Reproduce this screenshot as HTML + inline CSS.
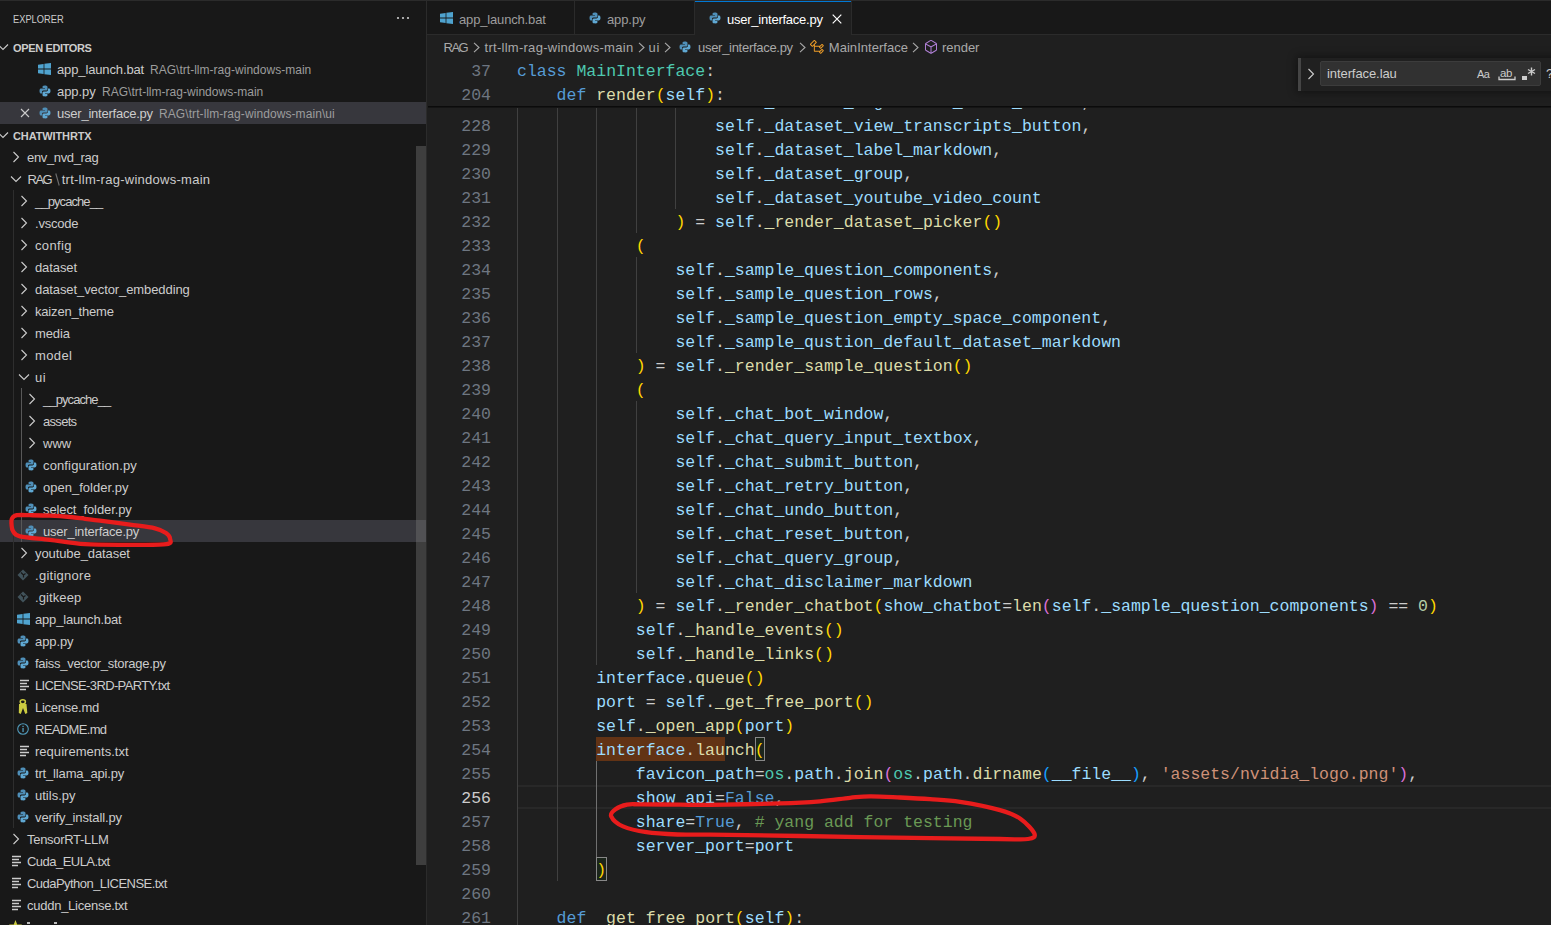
<!DOCTYPE html><html><head><meta charset="utf-8"><style>
*{margin:0;padding:0;box-sizing:border-box}
html,body{width:1551px;height:925px;overflow:hidden;background:#181818}
body{position:relative;font-family:"Liberation Sans",sans-serif;color:#cccccc}
.abs{position:absolute}
.t{position:absolute;white-space:nowrap;font-size:13px;height:22px;line-height:22px}
.row{position:absolute;left:0;width:426px;height:22px}
.sel{background:#37373d}
.code{position:absolute;left:517px;height:24px;line-height:24px;font-family:"Liberation Mono",monospace;font-size:16.5px;white-space:pre;color:#cccccc}
.ln{position:absolute;left:427px;width:64px;text-align:right;height:24px;line-height:24px;font-family:"Liberation Mono",monospace;font-size:16.5px;color:#6e7681}
.ig{position:absolute;width:1px;background:#404040}
</style></head><body>
<div class="abs" style="left:0;top:0;width:1551px;height:1px;background:#2b2b2b;z-index:50"></div>
<div class="abs" style="left:426px;top:0;width:1px;height:925px;background:#2b2b2b;z-index:5"></div>
<div class="t" style="left:13px;top:8px;font-size:11px;transform:scaleX(0.845);transform-origin:0 0;color:#cccccc">EXPLORER</div>
<svg class="abs" style="left:396px;top:16px" width="14" height="4" viewBox="0 0 14 4"><circle cx="2" cy="2" r="1.1" fill="#cccccc"/><circle cx="7" cy="2" r="1.1" fill="#cccccc"/><circle cx="12" cy="2" r="1.1" fill="#cccccc"/></svg>
<svg class="abs" style="left:-3px;top:43px" width="12" height="8" viewBox="0 0 12 8"><path d="M1 1.5 L6 6.5 L11 1.5" fill="none" stroke="#cccccc" stroke-width="1.1"/></svg>
<div class="t" style="left:13px;top:37px;font-size:11px;color:#cccccc;letter-spacing:-0.362px;font-weight:bold;">OPEN EDITORS</div>
<div class="row sel" style="top:102px"></div>
<svg class="abs" style="left:38px;top:63px" width="13" height="12" viewBox="0 0 13 12"><path d="M0 1.7 L5.6 0.9 V5.6 H0 Z M6.4 0.8 L13 0 V5.6 H6.4 Z M0 6.4 H5.6 V11.1 L0 10.3 Z M6.4 6.4 H13 V12 L6.4 11.2 Z" fill="#4fa3cf"/></svg>
<div class="t" style="left:57px;top:59px;font-size:13px;color:#cccccc;letter-spacing:-0.131px;">app_launch.bat</div>
<div class="t" style="left:150px;top:59px;font-size:12px;color:#9d9d9d;letter-spacing:0.022px;">RAG\trt-llm-rag-windows-main</div>
<svg class="abs" style="left:39px;top:85px" width="12" height="12" viewBox="0 0 12 12"><path d="M5.8 0.5 C3.5 0.5 3.6 1.5 3.6 1.5 V3 H6 V3.6 H2.2 C2.2 3.6 0.5 3.4 0.5 6 C0.5 8.6 2 8.5 2 8.5 H3 V7.2 C3 7.2 2.9 5.6 4.5 5.6 H7 C7 5.6 8.5 5.6 8.5 4.2 V1.9 C8.5 1.9 8.7 0.5 5.8 0.5 Z" fill="#4f8fb8"/><path d="M6.2 11.5 C8.5 11.5 8.4 10.5 8.4 10.5 V9 H6 V8.4 H9.8 C9.8 8.4 11.5 8.6 11.5 6 C11.5 3.4 10 3.5 10 3.5 H9 V4.8 C9 4.8 9.1 6.4 7.5 6.4 H5 C5 6.4 3.5 6.4 3.5 7.8 V10.1 C3.5 10.1 3.3 11.5 6.2 11.5 Z" fill="#5fa8d3"/></svg>
<div class="t" style="left:57px;top:81px;font-size:13px;color:#cccccc;letter-spacing:-0.066px;">app.py</div>
<div class="t" style="left:102px;top:81px;font-size:12px;color:#9d9d9d;letter-spacing:0.022px;">RAG\trt-llm-rag-windows-main</div>
<svg class="abs" style="left:20px;top:108px" width="10" height="10" viewBox="0 0 10 10"><path d="M1 1 L9 9 M9 1 L1 9" stroke="#cccccc" stroke-width="1.1"/></svg>
<svg class="abs" style="left:39px;top:107px" width="12" height="12" viewBox="0 0 12 12"><path d="M5.8 0.5 C3.5 0.5 3.6 1.5 3.6 1.5 V3 H6 V3.6 H2.2 C2.2 3.6 0.5 3.4 0.5 6 C0.5 8.6 2 8.5 2 8.5 H3 V7.2 C3 7.2 2.9 5.6 4.5 5.6 H7 C7 5.6 8.5 5.6 8.5 4.2 V1.9 C8.5 1.9 8.7 0.5 5.8 0.5 Z" fill="#4f8fb8"/><path d="M6.2 11.5 C8.5 11.5 8.4 10.5 8.4 10.5 V9 H6 V8.4 H9.8 C9.8 8.4 11.5 8.6 11.5 6 C11.5 3.4 10 3.5 10 3.5 H9 V4.8 C9 4.8 9.1 6.4 7.5 6.4 H5 C5 6.4 3.5 6.4 3.5 7.8 V10.1 C3.5 10.1 3.3 11.5 6.2 11.5 Z" fill="#5fa8d3"/></svg>
<div class="t" style="left:57px;top:103px;font-size:13px;color:#cccccc;letter-spacing:-0.226px;">user_interface.py</div>
<div class="t" style="left:159px;top:103px;font-size:12px;color:#9d9d9d;letter-spacing:0.080px;">RAG\trt-llm-rag-windows-main\ui</div>
<svg class="abs" style="left:-3px;top:131px" width="12" height="8" viewBox="0 0 12 8"><path d="M1 1.5 L6 6.5 L11 1.5" fill="none" stroke="#cccccc" stroke-width="1.1"/></svg>
<div class="t" style="left:13px;top:125px;font-size:11px;color:#cccccc;letter-spacing:-0.120px;font-weight:bold;">CHATWITHRTX</div>
<svg class="abs" style="left:12px;top:151px" width="8" height="12" viewBox="0 0 8 12"><path d="M1.5 1 L6.5 6 L1.5 11" fill="none" stroke="#cccccc" stroke-width="1.1"/></svg>
<div class="t" style="left:27px;top:147px;font-size:13px;color:#cccccc;letter-spacing:-0.354px;">env_nvd_rag</div>
<svg class="abs" style="left:10px;top:175px" width="12" height="8" viewBox="0 0 12 8"><path d="M1 1.5 L6 6.5 L11 1.5" fill="none" stroke="#cccccc" stroke-width="1.1"/></svg>
<div class="t" style="left:27.5px;top:169px;font-size:13px;color:#cccccc;letter-spacing:-1.500px;">RAG</div>
<svg class="abs" style="left:55px;top:173px" width="5" height="13" viewBox="0 0 5 13"><path d="M0.8 0.5 L4.2 12.5" stroke="#707070" stroke-width="1.1"/></svg>
<div class="t" style="left:61.7px;top:169px;font-size:13px;color:#cccccc;letter-spacing:0.262px;">trt-llm-rag-windows-main</div>
<svg class="abs" style="left:20px;top:195px" width="8" height="12" viewBox="0 0 8 12"><path d="M1.5 1 L6.5 6 L1.5 11" fill="none" stroke="#cccccc" stroke-width="1.1"/></svg>
<div class="t" style="left:35px;top:191px;font-size:13px;color:#cccccc;letter-spacing:-0.911px;">__pycache__</div>
<svg class="abs" style="left:20px;top:217px" width="8" height="12" viewBox="0 0 8 12"><path d="M1.5 1 L6.5 6 L1.5 11" fill="none" stroke="#cccccc" stroke-width="1.1"/></svg>
<div class="t" style="left:35px;top:213px;font-size:13px;color:#cccccc;letter-spacing:-0.229px;">.vscode</div>
<svg class="abs" style="left:20px;top:239px" width="8" height="12" viewBox="0 0 8 12"><path d="M1.5 1 L6.5 6 L1.5 11" fill="none" stroke="#cccccc" stroke-width="1.1"/></svg>
<div class="t" style="left:35px;top:235px;font-size:13px;color:#cccccc;letter-spacing:0.368px;">config</div>
<svg class="abs" style="left:20px;top:261px" width="8" height="12" viewBox="0 0 8 12"><path d="M1.5 1 L6.5 6 L1.5 11" fill="none" stroke="#cccccc" stroke-width="1.1"/></svg>
<div class="t" style="left:35px;top:257px;font-size:13px;color:#cccccc;letter-spacing:-0.105px;">dataset</div>
<svg class="abs" style="left:20px;top:283px" width="8" height="12" viewBox="0 0 8 12"><path d="M1.5 1 L6.5 6 L1.5 11" fill="none" stroke="#cccccc" stroke-width="1.1"/></svg>
<div class="t" style="left:35px;top:279px;font-size:13px;color:#cccccc;letter-spacing:-0.087px;">dataset_vector_embedding</div>
<svg class="abs" style="left:20px;top:305px" width="8" height="12" viewBox="0 0 8 12"><path d="M1.5 1 L6.5 6 L1.5 11" fill="none" stroke="#cccccc" stroke-width="1.1"/></svg>
<div class="t" style="left:35px;top:301px;font-size:13px;color:#cccccc;letter-spacing:-0.183px;">kaizen_theme</div>
<svg class="abs" style="left:20px;top:327px" width="8" height="12" viewBox="0 0 8 12"><path d="M1.5 1 L6.5 6 L1.5 11" fill="none" stroke="#cccccc" stroke-width="1.1"/></svg>
<div class="t" style="left:35px;top:323px;font-size:13px;color:#cccccc;letter-spacing:-0.119px;">media</div>
<svg class="abs" style="left:20px;top:349px" width="8" height="12" viewBox="0 0 8 12"><path d="M1.5 1 L6.5 6 L1.5 11" fill="none" stroke="#cccccc" stroke-width="1.1"/></svg>
<div class="t" style="left:35px;top:345px;font-size:13px;color:#cccccc;letter-spacing:0.395px;">model</div>
<svg class="abs" style="left:18px;top:373px" width="12" height="8" viewBox="0 0 12 8"><path d="M1 1.5 L6 6.5 L11 1.5" fill="none" stroke="#cccccc" stroke-width="1.1"/></svg>
<div class="t" style="left:35px;top:367px;font-size:13px;color:#cccccc;letter-spacing:0.570px;">ui</div>
<svg class="abs" style="left:28px;top:393px" width="8" height="12" viewBox="0 0 8 12"><path d="M1.5 1 L6.5 6 L1.5 11" fill="none" stroke="#cccccc" stroke-width="1.1"/></svg>
<div class="t" style="left:43px;top:389px;font-size:13px;color:#cccccc;letter-spacing:-0.911px;">__pycache__</div>
<svg class="abs" style="left:28px;top:415px" width="8" height="12" viewBox="0 0 8 12"><path d="M1.5 1 L6.5 6 L1.5 11" fill="none" stroke="#cccccc" stroke-width="1.1"/></svg>
<div class="t" style="left:43px;top:411px;font-size:13px;color:#cccccc;letter-spacing:-0.694px;">assets</div>
<svg class="abs" style="left:28px;top:437px" width="8" height="12" viewBox="0 0 8 12"><path d="M1.5 1 L6.5 6 L1.5 11" fill="none" stroke="#cccccc" stroke-width="1.1"/></svg>
<div class="t" style="left:43px;top:433px;font-size:13px;color:#cccccc;letter-spacing:0.012px;">www</div>
<svg class="abs" style="left:25px;top:459px" width="12" height="12" viewBox="0 0 12 12"><path d="M5.8 0.5 C3.5 0.5 3.6 1.5 3.6 1.5 V3 H6 V3.6 H2.2 C2.2 3.6 0.5 3.4 0.5 6 C0.5 8.6 2 8.5 2 8.5 H3 V7.2 C3 7.2 2.9 5.6 4.5 5.6 H7 C7 5.6 8.5 5.6 8.5 4.2 V1.9 C8.5 1.9 8.7 0.5 5.8 0.5 Z" fill="#4f8fb8"/><path d="M6.2 11.5 C8.5 11.5 8.4 10.5 8.4 10.5 V9 H6 V8.4 H9.8 C9.8 8.4 11.5 8.6 11.5 6 C11.5 3.4 10 3.5 10 3.5 H9 V4.8 C9 4.8 9.1 6.4 7.5 6.4 H5 C5 6.4 3.5 6.4 3.5 7.8 V10.1 C3.5 10.1 3.3 11.5 6.2 11.5 Z" fill="#5fa8d3"/></svg>
<div class="t" style="left:43px;top:455px;font-size:13px;color:#cccccc;letter-spacing:0.135px;">configuration.py</div>
<svg class="abs" style="left:25px;top:481px" width="12" height="12" viewBox="0 0 12 12"><path d="M5.8 0.5 C3.5 0.5 3.6 1.5 3.6 1.5 V3 H6 V3.6 H2.2 C2.2 3.6 0.5 3.4 0.5 6 C0.5 8.6 2 8.5 2 8.5 H3 V7.2 C3 7.2 2.9 5.6 4.5 5.6 H7 C7 5.6 8.5 5.6 8.5 4.2 V1.9 C8.5 1.9 8.7 0.5 5.8 0.5 Z" fill="#4f8fb8"/><path d="M6.2 11.5 C8.5 11.5 8.4 10.5 8.4 10.5 V9 H6 V8.4 H9.8 C9.8 8.4 11.5 8.6 11.5 6 C11.5 3.4 10 3.5 10 3.5 H9 V4.8 C9 4.8 9.1 6.4 7.5 6.4 H5 C5 6.4 3.5 6.4 3.5 7.8 V10.1 C3.5 10.1 3.3 11.5 6.2 11.5 Z" fill="#5fa8d3"/></svg>
<div class="t" style="left:43px;top:477px;font-size:13px;color:#cccccc;letter-spacing:0.016px;">open_folder.py</div>
<svg class="abs" style="left:25px;top:503px" width="12" height="12" viewBox="0 0 12 12"><path d="M5.8 0.5 C3.5 0.5 3.6 1.5 3.6 1.5 V3 H6 V3.6 H2.2 C2.2 3.6 0.5 3.4 0.5 6 C0.5 8.6 2 8.5 2 8.5 H3 V7.2 C3 7.2 2.9 5.6 4.5 5.6 H7 C7 5.6 8.5 5.6 8.5 4.2 V1.9 C8.5 1.9 8.7 0.5 5.8 0.5 Z" fill="#4f8fb8"/><path d="M6.2 11.5 C8.5 11.5 8.4 10.5 8.4 10.5 V9 H6 V8.4 H9.8 C9.8 8.4 11.5 8.6 11.5 6 C11.5 3.4 10 3.5 10 3.5 H9 V4.8 C9 4.8 9.1 6.4 7.5 6.4 H5 C5 6.4 3.5 6.4 3.5 7.8 V10.1 C3.5 10.1 3.3 11.5 6.2 11.5 Z" fill="#5fa8d3"/></svg>
<div class="t" style="left:43px;top:499px;font-size:13px;color:#cccccc;letter-spacing:-0.102px;">select_folder.py</div>
<div class="row sel" style="top:520px"></div>
<svg class="abs" style="left:25px;top:525px" width="12" height="12" viewBox="0 0 12 12"><path d="M5.8 0.5 C3.5 0.5 3.6 1.5 3.6 1.5 V3 H6 V3.6 H2.2 C2.2 3.6 0.5 3.4 0.5 6 C0.5 8.6 2 8.5 2 8.5 H3 V7.2 C3 7.2 2.9 5.6 4.5 5.6 H7 C7 5.6 8.5 5.6 8.5 4.2 V1.9 C8.5 1.9 8.7 0.5 5.8 0.5 Z" fill="#4f8fb8"/><path d="M6.2 11.5 C8.5 11.5 8.4 10.5 8.4 10.5 V9 H6 V8.4 H9.8 C9.8 8.4 11.5 8.6 11.5 6 C11.5 3.4 10 3.5 10 3.5 H9 V4.8 C9 4.8 9.1 6.4 7.5 6.4 H5 C5 6.4 3.5 6.4 3.5 7.8 V10.1 C3.5 10.1 3.3 11.5 6.2 11.5 Z" fill="#5fa8d3"/></svg>
<div class="t" style="left:43px;top:521px;font-size:13px;color:#cccccc;letter-spacing:-0.214px;">user_interface.py</div>
<svg class="abs" style="left:20px;top:547px" width="8" height="12" viewBox="0 0 8 12"><path d="M1.5 1 L6.5 6 L1.5 11" fill="none" stroke="#cccccc" stroke-width="1.1"/></svg>
<div class="t" style="left:35px;top:543px;font-size:13px;color:#cccccc;letter-spacing:-0.087px;">youtube_dataset</div>
<svg class="abs" style="left:17px;top:569px" width="12" height="12" viewBox="0 0 12 12"><path d="M6 0.5 L11.5 6 L6 11.5 L0.5 6 Z" fill="#41535b"/><path d="M4 3.5 L6.5 6 M6.5 6 L6.5 8.5 M6.5 6 L8.5 4.5" stroke="#181818" stroke-width="1.2"/></svg>
<div class="t" style="left:35px;top:565px;font-size:13px;color:#cccccc;letter-spacing:0.272px;">.gitignore</div>
<svg class="abs" style="left:17px;top:591px" width="12" height="12" viewBox="0 0 12 12"><path d="M6 0.5 L11.5 6 L6 11.5 L0.5 6 Z" fill="#41535b"/><path d="M4 3.5 L6.5 6 M6.5 6 L6.5 8.5 M6.5 6 L8.5 4.5" stroke="#181818" stroke-width="1.2"/></svg>
<div class="t" style="left:35px;top:587px;font-size:13px;color:#cccccc;letter-spacing:0.100px;">.gitkeep</div>
<svg class="abs" style="left:17px;top:613px" width="13" height="12" viewBox="0 0 13 12"><path d="M0 1.7 L5.6 0.9 V5.6 H0 Z M6.4 0.8 L13 0 V5.6 H6.4 Z M0 6.4 H5.6 V11.1 L0 10.3 Z M6.4 6.4 H13 V12 L6.4 11.2 Z" fill="#4fa3cf"/></svg>
<div class="t" style="left:35px;top:609px;font-size:13px;color:#cccccc;letter-spacing:-0.177px;">app_launch.bat</div>
<svg class="abs" style="left:17px;top:635px" width="12" height="12" viewBox="0 0 12 12"><path d="M5.8 0.5 C3.5 0.5 3.6 1.5 3.6 1.5 V3 H6 V3.6 H2.2 C2.2 3.6 0.5 3.4 0.5 6 C0.5 8.6 2 8.5 2 8.5 H3 V7.2 C3 7.2 2.9 5.6 4.5 5.6 H7 C7 5.6 8.5 5.6 8.5 4.2 V1.9 C8.5 1.9 8.7 0.5 5.8 0.5 Z" fill="#4f8fb8"/><path d="M6.2 11.5 C8.5 11.5 8.4 10.5 8.4 10.5 V9 H6 V8.4 H9.8 C9.8 8.4 11.5 8.6 11.5 6 C11.5 3.4 10 3.5 10 3.5 H9 V4.8 C9 4.8 9.1 6.4 7.5 6.4 H5 C5 6.4 3.5 6.4 3.5 7.8 V10.1 C3.5 10.1 3.3 11.5 6.2 11.5 Z" fill="#5fa8d3"/></svg>
<div class="t" style="left:35px;top:631px;font-size:13px;color:#cccccc;letter-spacing:-0.086px;">app.py</div>
<svg class="abs" style="left:17px;top:657px" width="12" height="12" viewBox="0 0 12 12"><path d="M5.8 0.5 C3.5 0.5 3.6 1.5 3.6 1.5 V3 H6 V3.6 H2.2 C2.2 3.6 0.5 3.4 0.5 6 C0.5 8.6 2 8.5 2 8.5 H3 V7.2 C3 7.2 2.9 5.6 4.5 5.6 H7 C7 5.6 8.5 5.6 8.5 4.2 V1.9 C8.5 1.9 8.7 0.5 5.8 0.5 Z" fill="#4f8fb8"/><path d="M6.2 11.5 C8.5 11.5 8.4 10.5 8.4 10.5 V9 H6 V8.4 H9.8 C9.8 8.4 11.5 8.6 11.5 6 C11.5 3.4 10 3.5 10 3.5 H9 V4.8 C9 4.8 9.1 6.4 7.5 6.4 H5 C5 6.4 3.5 6.4 3.5 7.8 V10.1 C3.5 10.1 3.3 11.5 6.2 11.5 Z" fill="#5fa8d3"/></svg>
<div class="t" style="left:35px;top:653px;font-size:13px;color:#cccccc;letter-spacing:-0.291px;">faiss_vector_storage.py</div>
<svg class="abs" style="left:20px;top:679px" width="10" height="12" viewBox="0 0 10 12"><path d="M0 1.5 H9 M0 4.5 H7 M0 7.5 H9 M0 10.5 H6" stroke="#cccccc" stroke-width="1.3" fill="none"/></svg>
<div class="t" style="left:35px;top:675px;font-size:13px;color:#cccccc;letter-spacing:-0.644px;">LICENSE-3RD-PARTY.txt</div>
<svg class="abs" style="left:17px;top:698px" width="12" height="17" viewBox="0 0 12 17"><ellipse cx="5.8" cy="3.8" rx="2.6" ry="2.1" fill="none" stroke="#cbcb41" stroke-width="1.5"/><path d="M2 6 L9.5 6 L10.3 15 L8.3 16 L6 10 L3.8 16 L1.8 15 Z" fill="#cbcb41"/></svg>
<div class="t" style="left:35px;top:697px;font-size:13px;color:#cccccc;letter-spacing:-0.250px;">License.md</div>
<svg class="abs" style="left:17px;top:723px" width="12" height="12" viewBox="0 0 12 12"><circle cx="6" cy="6" r="5.3" fill="none" stroke="#519aba" stroke-width="1.1"/><rect x="5.4" y="5" width="1.3" height="4" fill="#519aba"/><rect x="5.4" y="2.8" width="1.3" height="1.3" fill="#519aba"/></svg>
<div class="t" style="left:35px;top:719px;font-size:13px;color:#cccccc;letter-spacing:-0.657px;">README.md</div>
<svg class="abs" style="left:20px;top:745px" width="10" height="12" viewBox="0 0 10 12"><path d="M0 1.5 H9 M0 4.5 H7 M0 7.5 H9 M0 10.5 H6" stroke="#cccccc" stroke-width="1.3" fill="none"/></svg>
<div class="t" style="left:35px;top:741px;font-size:13px;color:#cccccc;letter-spacing:0.027px;">requirements.txt</div>
<svg class="abs" style="left:17px;top:767px" width="12" height="12" viewBox="0 0 12 12"><path d="M5.8 0.5 C3.5 0.5 3.6 1.5 3.6 1.5 V3 H6 V3.6 H2.2 C2.2 3.6 0.5 3.4 0.5 6 C0.5 8.6 2 8.5 2 8.5 H3 V7.2 C3 7.2 2.9 5.6 4.5 5.6 H7 C7 5.6 8.5 5.6 8.5 4.2 V1.9 C8.5 1.9 8.7 0.5 5.8 0.5 Z" fill="#4f8fb8"/><path d="M6.2 11.5 C8.5 11.5 8.4 10.5 8.4 10.5 V9 H6 V8.4 H9.8 C9.8 8.4 11.5 8.6 11.5 6 C11.5 3.4 10 3.5 10 3.5 H9 V4.8 C9 4.8 9.1 6.4 7.5 6.4 H5 C5 6.4 3.5 6.4 3.5 7.8 V10.1 C3.5 10.1 3.3 11.5 6.2 11.5 Z" fill="#5fa8d3"/></svg>
<div class="t" style="left:35px;top:763px;font-size:13px;color:#cccccc;letter-spacing:-0.165px;">trt_llama_api.py</div>
<svg class="abs" style="left:17px;top:789px" width="12" height="12" viewBox="0 0 12 12"><path d="M5.8 0.5 C3.5 0.5 3.6 1.5 3.6 1.5 V3 H6 V3.6 H2.2 C2.2 3.6 0.5 3.4 0.5 6 C0.5 8.6 2 8.5 2 8.5 H3 V7.2 C3 7.2 2.9 5.6 4.5 5.6 H7 C7 5.6 8.5 5.6 8.5 4.2 V1.9 C8.5 1.9 8.7 0.5 5.8 0.5 Z" fill="#4f8fb8"/><path d="M6.2 11.5 C8.5 11.5 8.4 10.5 8.4 10.5 V9 H6 V8.4 H9.8 C9.8 8.4 11.5 8.6 11.5 6 C11.5 3.4 10 3.5 10 3.5 H9 V4.8 C9 4.8 9.1 6.4 7.5 6.4 H5 C5 6.4 3.5 6.4 3.5 7.8 V10.1 C3.5 10.1 3.3 11.5 6.2 11.5 Z" fill="#5fa8d3"/></svg>
<div class="t" style="left:35px;top:785px;font-size:13px;color:#cccccc;letter-spacing:0.006px;">utils.py</div>
<svg class="abs" style="left:17px;top:811px" width="12" height="12" viewBox="0 0 12 12"><path d="M5.8 0.5 C3.5 0.5 3.6 1.5 3.6 1.5 V3 H6 V3.6 H2.2 C2.2 3.6 0.5 3.4 0.5 6 C0.5 8.6 2 8.5 2 8.5 H3 V7.2 C3 7.2 2.9 5.6 4.5 5.6 H7 C7 5.6 8.5 5.6 8.5 4.2 V1.9 C8.5 1.9 8.7 0.5 5.8 0.5 Z" fill="#4f8fb8"/><path d="M6.2 11.5 C8.5 11.5 8.4 10.5 8.4 10.5 V9 H6 V8.4 H9.8 C9.8 8.4 11.5 8.6 11.5 6 C11.5 3.4 10 3.5 10 3.5 H9 V4.8 C9 4.8 9.1 6.4 7.5 6.4 H5 C5 6.4 3.5 6.4 3.5 7.8 V10.1 C3.5 10.1 3.3 11.5 6.2 11.5 Z" fill="#5fa8d3"/></svg>
<div class="t" style="left:35px;top:807px;font-size:13px;color:#cccccc;letter-spacing:-0.110px;">verify_install.py</div>
<svg class="abs" style="left:12px;top:833px" width="8" height="12" viewBox="0 0 8 12"><path d="M1.5 1 L6.5 6 L1.5 11" fill="none" stroke="#cccccc" stroke-width="1.1"/></svg>
<div class="t" style="left:27px;top:829px;font-size:13px;color:#cccccc;letter-spacing:-0.299px;">TensorRT-LLM</div>
<svg class="abs" style="left:12px;top:855px" width="10" height="12" viewBox="0 0 10 12"><path d="M0 1.5 H9 M0 4.5 H7 M0 7.5 H9 M0 10.5 H6" stroke="#cccccc" stroke-width="1.3" fill="none"/></svg>
<div class="t" style="left:27px;top:851px;font-size:13px;color:#cccccc;letter-spacing:-0.533px;">Cuda_EULA.txt</div>
<svg class="abs" style="left:12px;top:877px" width="10" height="12" viewBox="0 0 10 12"><path d="M0 1.5 H9 M0 4.5 H7 M0 7.5 H9 M0 10.5 H6" stroke="#cccccc" stroke-width="1.3" fill="none"/></svg>
<div class="t" style="left:27px;top:873px;font-size:13px;color:#cccccc;letter-spacing:-0.540px;">CudaPython_LICENSE.txt</div>
<svg class="abs" style="left:12px;top:899px" width="10" height="12" viewBox="0 0 10 12"><path d="M0 1.5 H9 M0 4.5 H7 M0 7.5 H9 M0 10.5 H6" stroke="#cccccc" stroke-width="1.3" fill="none"/></svg>
<div class="t" style="left:27px;top:895px;font-size:13px;color:#cccccc;letter-spacing:-0.255px;">cuddn_License.txt</div>
<svg class="abs" style="left:9px;top:920px" width="13" height="13" viewBox="0 0 13 13"><path d="M6.5 0 L8.2 4.4 L13 4.6 L9.2 7.6 L10.5 12.4 L6.5 9.6 L2.5 12.4 L3.8 7.6 L0 4.6 L4.8 4.4 Z" fill="#cbcb41"/></svg>
<div class="abs" style="left:27px;top:922px;width:3px;height:2px;background:#bbbbbb"></div>
<div class="abs" style="left:54px;top:922px;width:3px;height:2px;background:#bbbbbb"></div>
<div class="abs" style="left:13px;top:190px;width:1px;height:638px;background:#2e2e2e"></div>
<div class="abs" style="left:21px;top:388px;width:1px;height:154px;background:#585858"></div>
<div class="abs" style="left:416px;top:146px;width:10px;height:719px;background:rgba(121,121,121,0.4)"></div>
<div class="abs" style="left:427px;top:35px;width:1124px;height:890px;background:#1f1f1f"></div>
<div class="abs" style="left:427px;top:34px;width:1124px;height:1px;background:#2b2b2b"></div>
<div class="abs" style="left:574px;top:0;width:1px;height:35px;background:#2b2b2b"></div>
<div class="abs" style="left:694px;top:0;width:1px;height:35px;background:#2b2b2b"></div>
<div class="abs" style="left:851px;top:0;width:1px;height:35px;background:#2b2b2b"></div>
<div class="abs" style="left:695px;top:0;width:156px;height:35px;background:#1f1f1f"></div>
<div class="abs" style="left:695px;top:1px;width:156px;height:1px;background:#0078d4;z-index:60"></div>
<svg class="abs" style="left:440px;top:12px" width="13" height="12" viewBox="0 0 13 12"><path d="M0 1.7 L5.6 0.9 V5.6 H0 Z M6.4 0.8 L13 0 V5.6 H6.4 Z M0 6.4 H5.6 V11.1 L0 10.3 Z M6.4 6.4 H13 V12 L6.4 11.2 Z" fill="#4fa3cf"/></svg>
<div class="t" style="left:459px;top:9px;font-size:13px;color:#9d9d9d;letter-spacing:-0.162px;">app_launch.bat</div>
<svg class="abs" style="left:589px;top:12px" width="12" height="12" viewBox="0 0 12 12"><path d="M5.8 0.5 C3.5 0.5 3.6 1.5 3.6 1.5 V3 H6 V3.6 H2.2 C2.2 3.6 0.5 3.4 0.5 6 C0.5 8.6 2 8.5 2 8.5 H3 V7.2 C3 7.2 2.9 5.6 4.5 5.6 H7 C7 5.6 8.5 5.6 8.5 4.2 V1.9 C8.5 1.9 8.7 0.5 5.8 0.5 Z" fill="#4f8fb8"/><path d="M6.2 11.5 C8.5 11.5 8.4 10.5 8.4 10.5 V9 H6 V8.4 H9.8 C9.8 8.4 11.5 8.6 11.5 6 C11.5 3.4 10 3.5 10 3.5 H9 V4.8 C9 4.8 9.1 6.4 7.5 6.4 H5 C5 6.4 3.5 6.4 3.5 7.8 V10.1 C3.5 10.1 3.3 11.5 6.2 11.5 Z" fill="#5fa8d3"/></svg>
<div class="t" style="left:607px;top:9px;font-size:13px;color:#9d9d9d;letter-spacing:-0.106px;">app.py</div>
<svg class="abs" style="left:709px;top:12px" width="12" height="12" viewBox="0 0 12 12"><path d="M5.8 0.5 C3.5 0.5 3.6 1.5 3.6 1.5 V3 H6 V3.6 H2.2 C2.2 3.6 0.5 3.4 0.5 6 C0.5 8.6 2 8.5 2 8.5 H3 V7.2 C3 7.2 2.9 5.6 4.5 5.6 H7 C7 5.6 8.5 5.6 8.5 4.2 V1.9 C8.5 1.9 8.7 0.5 5.8 0.5 Z" fill="#4f8fb8"/><path d="M6.2 11.5 C8.5 11.5 8.4 10.5 8.4 10.5 V9 H6 V8.4 H9.8 C9.8 8.4 11.5 8.6 11.5 6 C11.5 3.4 10 3.5 10 3.5 H9 V4.8 C9 4.8 9.1 6.4 7.5 6.4 H5 C5 6.4 3.5 6.4 3.5 7.8 V10.1 C3.5 10.1 3.3 11.5 6.2 11.5 Z" fill="#5fa8d3"/></svg>
<div class="t" style="left:727px;top:9px;font-size:13px;color:#ffffff;letter-spacing:-0.233px;">user_interface.py</div>
<svg class="abs" style="left:832px;top:14px" width="10" height="10" viewBox="0 0 10 10"><path d="M0.7 0.7 L9.3 9.3 M9.3 0.7 L0.7 9.3" stroke="#ffffff" stroke-width="1.2"/></svg>
<div class="t" style="left:443.5px;top:37px;font-size:13px;color:#a9a9a9;letter-spacing:-1.500px;">RAG</div>
<svg class="abs" style="left:473px;top:42px" width="7" height="11" viewBox="0 0 7 11"><path d="M1 0.8 L6 5.5 L1 10.2" fill="none" stroke="#a9a9a9" stroke-width="1.1"/></svg>
<div class="t" style="left:484.5px;top:37px;font-size:13px;color:#a9a9a9;letter-spacing:0.275px;">trt-llm-rag-windows-main</div>
<svg class="abs" style="left:638px;top:42px" width="7" height="11" viewBox="0 0 7 11"><path d="M1 0.8 L6 5.5 L1 10.2" fill="none" stroke="#a9a9a9" stroke-width="1.1"/></svg>
<div class="t" style="left:648.6px;top:37px;font-size:13px;color:#a9a9a9;letter-spacing:0.570px;">ui</div>
<svg class="abs" style="left:664px;top:42px" width="7" height="11" viewBox="0 0 7 11"><path d="M1 0.8 L6 5.5 L1 10.2" fill="none" stroke="#a9a9a9" stroke-width="1.1"/></svg>
<svg class="abs" style="left:679px;top:41px" width="12" height="12" viewBox="0 0 12 12"><path d="M5.8 0.5 C3.5 0.5 3.6 1.5 3.6 1.5 V3 H6 V3.6 H2.2 C2.2 3.6 0.5 3.4 0.5 6 C0.5 8.6 2 8.5 2 8.5 H3 V7.2 C3 7.2 2.9 5.6 4.5 5.6 H7 C7 5.6 8.5 5.6 8.5 4.2 V1.9 C8.5 1.9 8.7 0.5 5.8 0.5 Z" fill="#4f8fb8"/><path d="M6.2 11.5 C8.5 11.5 8.4 10.5 8.4 10.5 V9 H6 V8.4 H9.8 C9.8 8.4 11.5 8.6 11.5 6 C11.5 3.4 10 3.5 10 3.5 H9 V4.8 C9 4.8 9.1 6.4 7.5 6.4 H5 C5 6.4 3.5 6.4 3.5 7.8 V10.1 C3.5 10.1 3.3 11.5 6.2 11.5 Z" fill="#5fa8d3"/></svg>
<div class="t" style="left:698px;top:37px;font-size:13px;color:#a9a9a9;letter-spacing:-0.289px;">user_interface.py</div>
<svg class="abs" style="left:799px;top:42px" width="7" height="11" viewBox="0 0 7 11"><path d="M1 0.8 L6 5.5 L1 10.2" fill="none" stroke="#a9a9a9" stroke-width="1.1"/></svg>
<svg class="abs" style="left:809px;top:39px" width="16" height="16" viewBox="0 0 16 16"><path fill="#ee9d28" d="M11.34 9.71h.71l2.67-2.67v-.71L13.38 5h-.7l-1.82 1.81h-5V5.56l1.86-1.85V3l-2-2H5L1 5v.71l2 2h.71l1.14-1.15v5.79l.5.5H10v.52l1.33 1.34h.71l2.67-2.67v-.71L13.37 10h-.7l-1.86 1.85h-5v-4H10v.48l1.34 1.38zm1.69-3.65l.63.63-2 2-.63-.63 2-2zm0 5l.63.63-2 2-.63-.63 2-2zM3.35 6.65L2.06 5.35 5.35 2.06l1.3 1.29-3.3 3.3z"/></svg>
<div class="t" style="left:828.8px;top:37px;font-size:13px;color:#a9a9a9;letter-spacing:0.039px;">MainInterface</div>
<svg class="abs" style="left:912px;top:42px" width="7" height="11" viewBox="0 0 7 11"><path d="M1 0.8 L6 5.5 L1 10.2" fill="none" stroke="#a9a9a9" stroke-width="1.1"/></svg>
<svg class="abs" style="left:923px;top:39px" width="16" height="16" viewBox="0 0 16 16"><path fill="#b180d7" d="M13.51 4l-5-3h-1l-5 3-.49.86v6l.49.85 5 3h1l5-3 .49-.85v-6L13.51 4zm-6 9.56l-4.5-2.7V5.7l4.5 2.45v5.41zM3.27 4.7l4.74-2.84 4.74 2.84-4.74 2.59L3.27 4.7zm9.74 6.16l-4.5 2.7V8.15l4.5-2.45v5.16z"/></svg>
<div class="t" style="left:942px;top:37px;font-size:13px;color:#a9a9a9;letter-spacing:-0.030px;">render</div>
<div class="abs" style="left:518px;top:785px;width:1038px;height:24px;border:2px solid #282828;border-left:none;border-right:none"></div>
<div class="abs" style="left:596.2px;top:737px;width:128.7px;height:24px;background:#623315"></div>
<div class="abs" style="left:754.6px;top:737px;width:10.9px;height:24px;border:1px solid #888888;background:rgba(0,100,0,0.1)"></div>
<div class="abs" style="left:596.2px;top:857px;width:10.9px;height:24px;border:1px solid #888888;background:rgba(0,100,0,0.1)"></div>
<div class="ig" style="left:517.0px;top:89px;height:24px;background:#404040"></div>
<div class="ig" style="left:556.6px;top:89px;height:24px;background:#404040"></div>
<div class="ig" style="left:596.2px;top:89px;height:24px;background:#404040"></div>
<div class="ig" style="left:635.8px;top:89px;height:24px;background:#404040"></div>
<div class="ig" style="left:675.4px;top:89px;height:24px;background:#404040"></div>
<div class="ig" style="left:517.0px;top:113px;height:24px;background:#404040"></div>
<div class="ig" style="left:556.6px;top:113px;height:24px;background:#404040"></div>
<div class="ig" style="left:596.2px;top:113px;height:24px;background:#404040"></div>
<div class="ig" style="left:635.8px;top:113px;height:24px;background:#404040"></div>
<div class="ig" style="left:675.4px;top:113px;height:24px;background:#404040"></div>
<div class="ig" style="left:517.0px;top:137px;height:24px;background:#404040"></div>
<div class="ig" style="left:556.6px;top:137px;height:24px;background:#404040"></div>
<div class="ig" style="left:596.2px;top:137px;height:24px;background:#404040"></div>
<div class="ig" style="left:635.8px;top:137px;height:24px;background:#404040"></div>
<div class="ig" style="left:675.4px;top:137px;height:24px;background:#404040"></div>
<div class="ig" style="left:517.0px;top:161px;height:24px;background:#404040"></div>
<div class="ig" style="left:556.6px;top:161px;height:24px;background:#404040"></div>
<div class="ig" style="left:596.2px;top:161px;height:24px;background:#404040"></div>
<div class="ig" style="left:635.8px;top:161px;height:24px;background:#404040"></div>
<div class="ig" style="left:675.4px;top:161px;height:24px;background:#404040"></div>
<div class="ig" style="left:517.0px;top:185px;height:24px;background:#404040"></div>
<div class="ig" style="left:556.6px;top:185px;height:24px;background:#404040"></div>
<div class="ig" style="left:596.2px;top:185px;height:24px;background:#404040"></div>
<div class="ig" style="left:635.8px;top:185px;height:24px;background:#404040"></div>
<div class="ig" style="left:675.4px;top:185px;height:24px;background:#404040"></div>
<div class="ig" style="left:517.0px;top:209px;height:24px;background:#404040"></div>
<div class="ig" style="left:556.6px;top:209px;height:24px;background:#404040"></div>
<div class="ig" style="left:596.2px;top:209px;height:24px;background:#404040"></div>
<div class="ig" style="left:635.8px;top:209px;height:24px;background:#404040"></div>
<div class="ig" style="left:517.0px;top:233px;height:24px;background:#404040"></div>
<div class="ig" style="left:556.6px;top:233px;height:24px;background:#404040"></div>
<div class="ig" style="left:596.2px;top:233px;height:24px;background:#404040"></div>
<div class="ig" style="left:517.0px;top:257px;height:24px;background:#404040"></div>
<div class="ig" style="left:556.6px;top:257px;height:24px;background:#404040"></div>
<div class="ig" style="left:596.2px;top:257px;height:24px;background:#404040"></div>
<div class="ig" style="left:635.8px;top:257px;height:24px;background:#404040"></div>
<div class="ig" style="left:517.0px;top:281px;height:24px;background:#404040"></div>
<div class="ig" style="left:556.6px;top:281px;height:24px;background:#404040"></div>
<div class="ig" style="left:596.2px;top:281px;height:24px;background:#404040"></div>
<div class="ig" style="left:635.8px;top:281px;height:24px;background:#404040"></div>
<div class="ig" style="left:517.0px;top:305px;height:24px;background:#404040"></div>
<div class="ig" style="left:556.6px;top:305px;height:24px;background:#404040"></div>
<div class="ig" style="left:596.2px;top:305px;height:24px;background:#404040"></div>
<div class="ig" style="left:635.8px;top:305px;height:24px;background:#404040"></div>
<div class="ig" style="left:517.0px;top:329px;height:24px;background:#404040"></div>
<div class="ig" style="left:556.6px;top:329px;height:24px;background:#404040"></div>
<div class="ig" style="left:596.2px;top:329px;height:24px;background:#404040"></div>
<div class="ig" style="left:635.8px;top:329px;height:24px;background:#404040"></div>
<div class="ig" style="left:517.0px;top:353px;height:24px;background:#404040"></div>
<div class="ig" style="left:556.6px;top:353px;height:24px;background:#404040"></div>
<div class="ig" style="left:596.2px;top:353px;height:24px;background:#404040"></div>
<div class="ig" style="left:517.0px;top:377px;height:24px;background:#404040"></div>
<div class="ig" style="left:556.6px;top:377px;height:24px;background:#404040"></div>
<div class="ig" style="left:596.2px;top:377px;height:24px;background:#404040"></div>
<div class="ig" style="left:517.0px;top:401px;height:24px;background:#404040"></div>
<div class="ig" style="left:556.6px;top:401px;height:24px;background:#404040"></div>
<div class="ig" style="left:596.2px;top:401px;height:24px;background:#404040"></div>
<div class="ig" style="left:635.8px;top:401px;height:24px;background:#404040"></div>
<div class="ig" style="left:517.0px;top:425px;height:24px;background:#404040"></div>
<div class="ig" style="left:556.6px;top:425px;height:24px;background:#404040"></div>
<div class="ig" style="left:596.2px;top:425px;height:24px;background:#404040"></div>
<div class="ig" style="left:635.8px;top:425px;height:24px;background:#404040"></div>
<div class="ig" style="left:517.0px;top:449px;height:24px;background:#404040"></div>
<div class="ig" style="left:556.6px;top:449px;height:24px;background:#404040"></div>
<div class="ig" style="left:596.2px;top:449px;height:24px;background:#404040"></div>
<div class="ig" style="left:635.8px;top:449px;height:24px;background:#404040"></div>
<div class="ig" style="left:517.0px;top:473px;height:24px;background:#404040"></div>
<div class="ig" style="left:556.6px;top:473px;height:24px;background:#404040"></div>
<div class="ig" style="left:596.2px;top:473px;height:24px;background:#404040"></div>
<div class="ig" style="left:635.8px;top:473px;height:24px;background:#404040"></div>
<div class="ig" style="left:517.0px;top:497px;height:24px;background:#404040"></div>
<div class="ig" style="left:556.6px;top:497px;height:24px;background:#404040"></div>
<div class="ig" style="left:596.2px;top:497px;height:24px;background:#404040"></div>
<div class="ig" style="left:635.8px;top:497px;height:24px;background:#404040"></div>
<div class="ig" style="left:517.0px;top:521px;height:24px;background:#404040"></div>
<div class="ig" style="left:556.6px;top:521px;height:24px;background:#404040"></div>
<div class="ig" style="left:596.2px;top:521px;height:24px;background:#404040"></div>
<div class="ig" style="left:635.8px;top:521px;height:24px;background:#404040"></div>
<div class="ig" style="left:517.0px;top:545px;height:24px;background:#404040"></div>
<div class="ig" style="left:556.6px;top:545px;height:24px;background:#404040"></div>
<div class="ig" style="left:596.2px;top:545px;height:24px;background:#404040"></div>
<div class="ig" style="left:635.8px;top:545px;height:24px;background:#404040"></div>
<div class="ig" style="left:517.0px;top:569px;height:24px;background:#404040"></div>
<div class="ig" style="left:556.6px;top:569px;height:24px;background:#404040"></div>
<div class="ig" style="left:596.2px;top:569px;height:24px;background:#404040"></div>
<div class="ig" style="left:635.8px;top:569px;height:24px;background:#404040"></div>
<div class="ig" style="left:517.0px;top:593px;height:24px;background:#404040"></div>
<div class="ig" style="left:556.6px;top:593px;height:24px;background:#404040"></div>
<div class="ig" style="left:596.2px;top:593px;height:24px;background:#404040"></div>
<div class="ig" style="left:517.0px;top:617px;height:24px;background:#404040"></div>
<div class="ig" style="left:556.6px;top:617px;height:24px;background:#404040"></div>
<div class="ig" style="left:596.2px;top:617px;height:24px;background:#404040"></div>
<div class="ig" style="left:517.0px;top:641px;height:24px;background:#404040"></div>
<div class="ig" style="left:556.6px;top:641px;height:24px;background:#404040"></div>
<div class="ig" style="left:596.2px;top:641px;height:24px;background:#404040"></div>
<div class="ig" style="left:517.0px;top:665px;height:24px;background:#404040"></div>
<div class="ig" style="left:556.6px;top:665px;height:24px;background:#404040"></div>
<div class="ig" style="left:517.0px;top:689px;height:24px;background:#404040"></div>
<div class="ig" style="left:556.6px;top:689px;height:24px;background:#404040"></div>
<div class="ig" style="left:517.0px;top:713px;height:24px;background:#404040"></div>
<div class="ig" style="left:556.6px;top:713px;height:24px;background:#404040"></div>
<div class="ig" style="left:517.0px;top:737px;height:24px;background:#404040"></div>
<div class="ig" style="left:556.6px;top:737px;height:24px;background:#404040"></div>
<div class="ig" style="left:517.0px;top:761px;height:24px;background:#404040"></div>
<div class="ig" style="left:556.6px;top:761px;height:24px;background:#404040"></div>
<div class="ig" style="left:596.2px;top:761px;height:24px;background:#707070"></div>
<div class="ig" style="left:517.0px;top:785px;height:24px;background:#404040"></div>
<div class="ig" style="left:556.6px;top:785px;height:24px;background:#404040"></div>
<div class="ig" style="left:596.2px;top:785px;height:24px;background:#707070"></div>
<div class="ig" style="left:517.0px;top:809px;height:24px;background:#404040"></div>
<div class="ig" style="left:556.6px;top:809px;height:24px;background:#404040"></div>
<div class="ig" style="left:596.2px;top:809px;height:24px;background:#707070"></div>
<div class="ig" style="left:517.0px;top:833px;height:24px;background:#404040"></div>
<div class="ig" style="left:556.6px;top:833px;height:24px;background:#404040"></div>
<div class="ig" style="left:596.2px;top:833px;height:24px;background:#707070"></div>
<div class="ig" style="left:517.0px;top:857px;height:24px;background:#404040"></div>
<div class="ig" style="left:556.6px;top:857px;height:24px;background:#404040"></div>
<div class="ig" style="left:517.0px;top:881px;height:24px;background:#404040"></div>
<div class="ig" style="left:517.0px;top:905px;height:24px;background:#404040"></div>
<div class="ln" style="top:91px;color:#6e7681">227</div>
<div class="code" style="top:91px;left:715.0px"><span style="color:#9cdcfe">self</span><span style="color:#cccccc">.</span><span style="color:#9cdcfe">_dataset_regenerate_index_button</span><span style="color:#cccccc">,</span></div>
<div class="ln" style="top:115px;color:#6e7681">228</div>
<div class="code" style="top:115px;left:715.0px"><span style="color:#9cdcfe">self</span><span style="color:#cccccc">.</span><span style="color:#9cdcfe">_dataset_view_transcripts_button</span><span style="color:#cccccc">,</span></div>
<div class="ln" style="top:139px;color:#6e7681">229</div>
<div class="code" style="top:139px;left:715.0px"><span style="color:#9cdcfe">self</span><span style="color:#cccccc">.</span><span style="color:#9cdcfe">_dataset_label_markdown</span><span style="color:#cccccc">,</span></div>
<div class="ln" style="top:163px;color:#6e7681">230</div>
<div class="code" style="top:163px;left:715.0px"><span style="color:#9cdcfe">self</span><span style="color:#cccccc">.</span><span style="color:#9cdcfe">_dataset_group</span><span style="color:#cccccc">,</span></div>
<div class="ln" style="top:187px;color:#6e7681">231</div>
<div class="code" style="top:187px;left:715.0px"><span style="color:#9cdcfe">self</span><span style="color:#cccccc">.</span><span style="color:#9cdcfe">_dataset_youtube_video_count</span></div>
<div class="ln" style="top:211px;color:#6e7681">232</div>
<div class="code" style="top:211px;left:675.4px"><span style="color:#ffd700">)</span><span style="color:#cccccc"> = </span><span style="color:#9cdcfe">self</span><span style="color:#cccccc">.</span><span style="color:#dcdcaa">_render_dataset_picker</span><span style="color:#ffd700">()</span></div>
<div class="ln" style="top:235px;color:#6e7681">233</div>
<div class="code" style="top:235px;left:635.8px"><span style="color:#ffd700">(</span></div>
<div class="ln" style="top:259px;color:#6e7681">234</div>
<div class="code" style="top:259px;left:675.4px"><span style="color:#9cdcfe">self</span><span style="color:#cccccc">.</span><span style="color:#9cdcfe">_sample_question_components</span><span style="color:#cccccc">,</span></div>
<div class="ln" style="top:283px;color:#6e7681">235</div>
<div class="code" style="top:283px;left:675.4px"><span style="color:#9cdcfe">self</span><span style="color:#cccccc">.</span><span style="color:#9cdcfe">_sample_question_rows</span><span style="color:#cccccc">,</span></div>
<div class="ln" style="top:307px;color:#6e7681">236</div>
<div class="code" style="top:307px;left:675.4px"><span style="color:#9cdcfe">self</span><span style="color:#cccccc">.</span><span style="color:#9cdcfe">_sample_question_empty_space_component</span><span style="color:#cccccc">,</span></div>
<div class="ln" style="top:331px;color:#6e7681">237</div>
<div class="code" style="top:331px;left:675.4px"><span style="color:#9cdcfe">self</span><span style="color:#cccccc">.</span><span style="color:#9cdcfe">_sample_qustion_default_dataset_markdown</span></div>
<div class="ln" style="top:355px;color:#6e7681">238</div>
<div class="code" style="top:355px;left:635.8px"><span style="color:#ffd700">)</span><span style="color:#cccccc"> = </span><span style="color:#9cdcfe">self</span><span style="color:#cccccc">.</span><span style="color:#dcdcaa">_render_sample_question</span><span style="color:#ffd700">()</span></div>
<div class="ln" style="top:379px;color:#6e7681">239</div>
<div class="code" style="top:379px;left:635.8px"><span style="color:#ffd700">(</span></div>
<div class="ln" style="top:403px;color:#6e7681">240</div>
<div class="code" style="top:403px;left:675.4px"><span style="color:#9cdcfe">self</span><span style="color:#cccccc">.</span><span style="color:#9cdcfe">_chat_bot_window</span><span style="color:#cccccc">,</span></div>
<div class="ln" style="top:427px;color:#6e7681">241</div>
<div class="code" style="top:427px;left:675.4px"><span style="color:#9cdcfe">self</span><span style="color:#cccccc">.</span><span style="color:#9cdcfe">_chat_query_input_textbox</span><span style="color:#cccccc">,</span></div>
<div class="ln" style="top:451px;color:#6e7681">242</div>
<div class="code" style="top:451px;left:675.4px"><span style="color:#9cdcfe">self</span><span style="color:#cccccc">.</span><span style="color:#9cdcfe">_chat_submit_button</span><span style="color:#cccccc">,</span></div>
<div class="ln" style="top:475px;color:#6e7681">243</div>
<div class="code" style="top:475px;left:675.4px"><span style="color:#9cdcfe">self</span><span style="color:#cccccc">.</span><span style="color:#9cdcfe">_chat_retry_button</span><span style="color:#cccccc">,</span></div>
<div class="ln" style="top:499px;color:#6e7681">244</div>
<div class="code" style="top:499px;left:675.4px"><span style="color:#9cdcfe">self</span><span style="color:#cccccc">.</span><span style="color:#9cdcfe">_chat_undo_button</span><span style="color:#cccccc">,</span></div>
<div class="ln" style="top:523px;color:#6e7681">245</div>
<div class="code" style="top:523px;left:675.4px"><span style="color:#9cdcfe">self</span><span style="color:#cccccc">.</span><span style="color:#9cdcfe">_chat_reset_button</span><span style="color:#cccccc">,</span></div>
<div class="ln" style="top:547px;color:#6e7681">246</div>
<div class="code" style="top:547px;left:675.4px"><span style="color:#9cdcfe">self</span><span style="color:#cccccc">.</span><span style="color:#9cdcfe">_chat_query_group</span><span style="color:#cccccc">,</span></div>
<div class="ln" style="top:571px;color:#6e7681">247</div>
<div class="code" style="top:571px;left:675.4px"><span style="color:#9cdcfe">self</span><span style="color:#cccccc">.</span><span style="color:#9cdcfe">_chat_disclaimer_markdown</span></div>
<div class="ln" style="top:595px;color:#6e7681">248</div>
<div class="code" style="top:595px;left:635.8px"><span style="color:#ffd700">)</span><span style="color:#cccccc"> = </span><span style="color:#9cdcfe">self</span><span style="color:#cccccc">.</span><span style="color:#dcdcaa">_render_chatbot</span><span style="color:#ffd700">(</span><span style="color:#9cdcfe">show_chatbot</span><span style="color:#cccccc">=</span><span style="color:#dcdcaa">len</span><span style="color:#da70d6">(</span><span style="color:#9cdcfe">self</span><span style="color:#cccccc">.</span><span style="color:#9cdcfe">_sample_question_components</span><span style="color:#da70d6">)</span><span style="color:#cccccc"> == </span><span style="color:#b5cea8">0</span><span style="color:#ffd700">)</span></div>
<div class="ln" style="top:619px;color:#6e7681">249</div>
<div class="code" style="top:619px;left:635.8px"><span style="color:#9cdcfe">self</span><span style="color:#cccccc">.</span><span style="color:#dcdcaa">_handle_events</span><span style="color:#ffd700">()</span></div>
<div class="ln" style="top:643px;color:#6e7681">250</div>
<div class="code" style="top:643px;left:635.8px"><span style="color:#9cdcfe">self</span><span style="color:#cccccc">.</span><span style="color:#dcdcaa">_handle_links</span><span style="color:#ffd700">()</span></div>
<div class="ln" style="top:667px;color:#6e7681">251</div>
<div class="code" style="top:667px;left:596.2px"><span style="color:#9cdcfe">interface</span><span style="color:#cccccc">.</span><span style="color:#dcdcaa">queue</span><span style="color:#ffd700">()</span></div>
<div class="ln" style="top:691px;color:#6e7681">252</div>
<div class="code" style="top:691px;left:596.2px"><span style="color:#9cdcfe">port</span><span style="color:#cccccc"> = </span><span style="color:#9cdcfe">self</span><span style="color:#cccccc">.</span><span style="color:#dcdcaa">_get_free_port</span><span style="color:#ffd700">()</span></div>
<div class="ln" style="top:715px;color:#6e7681">253</div>
<div class="code" style="top:715px;left:596.2px"><span style="color:#9cdcfe">self</span><span style="color:#cccccc">.</span><span style="color:#dcdcaa">_open_app</span><span style="color:#ffd700">(</span><span style="color:#9cdcfe">port</span><span style="color:#ffd700">)</span></div>
<div class="ln" style="top:739px;color:#6e7681">254</div>
<div class="code" style="top:739px;left:596.2px"><span style="color:#9cdcfe">interface</span><span style="color:#cccccc">.</span><span style="color:#dcdcaa">launch</span><span style="color:#ffd700">(</span></div>
<div class="ln" style="top:763px;color:#6e7681">255</div>
<div class="code" style="top:763px;left:635.8px"><span style="color:#9cdcfe">favicon_path</span><span style="color:#cccccc">=</span><span style="color:#4ec9b0">os</span><span style="color:#cccccc">.</span><span style="color:#9cdcfe">path</span><span style="color:#cccccc">.</span><span style="color:#dcdcaa">join</span><span style="color:#da70d6">(</span><span style="color:#4ec9b0">os</span><span style="color:#cccccc">.</span><span style="color:#9cdcfe">path</span><span style="color:#cccccc">.</span><span style="color:#dcdcaa">dirname</span><span style="color:#179fff">(</span><span style="color:#9cdcfe">__file__</span><span style="color:#179fff">)</span><span style="color:#cccccc">, </span><span style="color:#ce9178">&#x27;assets/nvidia_logo.png&#x27;</span><span style="color:#da70d6">)</span><span style="color:#cccccc">,</span></div>
<div class="ln" style="top:787px;color:#cccccc">256</div>
<div class="code" style="top:787px;left:635.8px"><span style="color:#9cdcfe">show_api</span><span style="color:#cccccc">=</span><span style="color:#569cd6">False</span><span style="color:#cccccc">,</span></div>
<div class="ln" style="top:811px;color:#6e7681">257</div>
<div class="code" style="top:811px;left:635.8px"><span style="color:#9cdcfe">share</span><span style="color:#cccccc">=</span><span style="color:#569cd6">True</span><span style="color:#cccccc">, </span><span style="color:#6a9955"># yang add for testing</span></div>
<div class="ln" style="top:835px;color:#6e7681">258</div>
<div class="code" style="top:835px;left:635.8px"><span style="color:#9cdcfe">server_port</span><span style="color:#cccccc">=</span><span style="color:#9cdcfe">port</span></div>
<div class="ln" style="top:859px;color:#6e7681">259</div>
<div class="code" style="top:859px;left:596.2px"><span style="color:#ffd700">)</span></div>
<div class="ln" style="top:883px;color:#6e7681">260</div>
<div class="ln" style="top:907px;color:#6e7681">261</div>
<div class="code" style="top:907px;left:556.6px"><span style="color:#569cd6">def</span><span style="color:#cccccc"> </span><span style="color:#dcdcaa"> get free port</span><span style="color:#ffd700">(</span><span style="color:#9cdcfe">self</span><span style="color:#ffd700">)</span><span style="color:#cccccc">:</span></div>
<div class="abs" style="left:427px;top:58px;width:1124px;height:48px;background:#1f1f1f;z-index:20"></div>
<div class="abs" style="left:428px;top:106px;width:1123px;height:1px;background:#0b0b0b;z-index:20"></div>
<div class="abs" style="left:428px;top:107px;width:1123px;height:1px;background:#141414;z-index:20"></div>
<div class="ln" style="top:60px;z-index:21">37</div>
<div class="code" style="top:60px;z-index:21"><span style="color:#569cd6">class</span><span style="color:#cccccc"> </span><span style="color:#4ec9b0">MainInterface</span><span style="color:#cccccc">:</span></div>
<div class="ln" style="top:84px;z-index:21">204</div>
<div class="code" style="top:84px;left:556.6px;z-index:21"><span style="color:#569cd6">def</span><span style="color:#cccccc"> </span><span style="color:#dcdcaa">render</span><span style="color:#ffd700">(</span><span style="color:#9cdcfe">self</span><span style="color:#ffd700">)</span><span style="color:#cccccc">:</span></div>
<div class="abs" style="left:1298px;top:58px;width:260px;height:33px;background:#202020;box-shadow:0 0 8px 2px rgba(0,0,0,0.36);z-index:30"></div>
<div class="abs" style="left:1298px;top:58px;width:3px;height:33px;background:#454545;z-index:31"></div>
<svg class="abs" style="left:1307px;top:68px;z-index:31" width="8" height="12" viewBox="0 0 8 12"><path d="M1.5 1 L6.5 6 L1.5 11" fill="none" stroke="#cccccc" stroke-width="1.1"/></svg>
<div class="abs" style="left:1320px;top:61px;width:221px;height:25px;background:#313131;border:1px solid #3c3c3c;border-radius:2px;z-index:31"></div>
<div class="t" style="left:1327px;top:63px;font-size:13px;color:#cccccc;letter-spacing:-0.083px;z-index:33;">interface.lau</div>
<div class="abs" style="left:1477px;top:63px;height:22px;line-height:22px;font-size:11px;letter-spacing:-0.5px;color:#cccccc;z-index:32">Aa</div>
<div class="abs" style="left:1500px;top:62px;height:22px;line-height:22px;font-size:11.5px;letter-spacing:-0.3px;color:#cccccc;z-index:32">ab</div>
<svg class="abs" style="left:1498px;top:76px;z-index:32" width="18" height="5" viewBox="0 0 18 5"><path d="M1 0.5 V3.5 H17 V0.5" fill="none" stroke="#cccccc" stroke-width="1.3"/></svg>
<div class="abs" style="left:1522px;top:76px;width:5px;height:4px;background:#cccccc;z-index:32"></div>
<svg class="abs" style="left:1527px;top:67px;z-index:32" width="9" height="9" viewBox="0 0 9 9"><path d="M4.5 0.5 V8.5 M1 2.5 L8 6.5 M1 6.5 L8 2.5" stroke="#cccccc" stroke-width="1.4"/></svg>
<div class="abs" style="left:1546px;top:63px;height:22px;line-height:22px;font-size:13px;color:#cccccc;z-index:32">?</div>
<svg class="abs" style="left:0;top:0;z-index:100" width="1551" height="925" viewBox="0 0 1551 925">
<path d="M17.0 515.2 C20.0 514.7 24.5 515.1 30.0 515.2 C35.5 515.3 43.3 515.4 50.0 515.7 C56.7 516.0 64.2 516.5 70.0 517.0 C75.8 517.5 80.0 518.2 85.0 518.8 C90.0 519.4 92.5 519.6 100.0 520.6 C107.5 521.6 120.8 523.3 130.0 524.6 C139.2 525.9 149.0 526.9 155.0 528.3 C161.0 529.7 163.5 531.3 166.0 533.0 C168.5 534.7 169.9 536.6 170.0 538.5 C170.1 540.4 173.1 543.2 166.4 544.2 C159.7 545.2 143.6 544.8 130.0 544.8 C116.4 544.8 98.3 545.0 85.0 544.2 C71.7 543.4 60.8 541.1 50.0 539.8 C39.2 538.5 26.2 537.8 20.0 536.3 C13.8 534.8 14.4 532.9 13.0 531.0 C11.6 529.1 11.8 527.1 11.6 525.0 C11.4 522.9 11.1 520.1 12.0 518.5 C12.9 516.9 14.0 515.8 17.0 515.2 Z" fill="none" stroke="#e81c1c" stroke-width="4.3" stroke-linejoin="round"/>
<path d="M627.0 804.7 C631.1 803.9 631.2 804.3 640.0 804.3 C648.8 804.3 668.3 804.6 680.0 804.7 C691.7 804.8 693.3 805.1 710.0 804.9 C726.7 804.7 761.7 804.0 780.0 803.4 C798.3 802.8 808.3 802.2 820.0 801.3 C831.7 800.4 841.7 798.6 850.0 797.8 C858.3 797.0 861.7 796.3 870.0 796.3 C878.3 796.2 890.0 797.0 900.0 797.5 C910.0 798.0 920.0 798.5 930.0 799.2 C940.0 799.9 948.3 800.0 960.0 801.8 C971.7 803.6 990.0 807.3 1000.0 810.1 C1010.0 812.9 1014.3 814.6 1020.0 818.5 C1025.7 822.4 1033.1 830.2 1034.4 833.6 C1035.7 837.0 1033.7 838.1 1028.0 839.0 C1022.3 839.9 1016.3 839.1 1000.0 839.0 C983.7 838.9 963.3 838.7 930.0 838.2 C896.7 837.7 836.7 836.6 800.0 836.0 C763.3 835.4 730.4 834.9 710.0 834.6 C689.6 834.4 688.0 834.9 677.4 834.5 C666.8 834.1 655.5 833.6 646.4 832.2 C637.3 830.9 628.9 829.0 623.0 826.4 C617.1 823.8 612.5 819.1 611.2 816.3 C610.0 813.4 612.9 811.2 615.5 809.3 C618.1 807.4 622.9 805.5 627.0 804.7 Z" fill="none" stroke="#e81c1c" stroke-width="4.3" stroke-linejoin="round"/>
</svg>
</body></html>
